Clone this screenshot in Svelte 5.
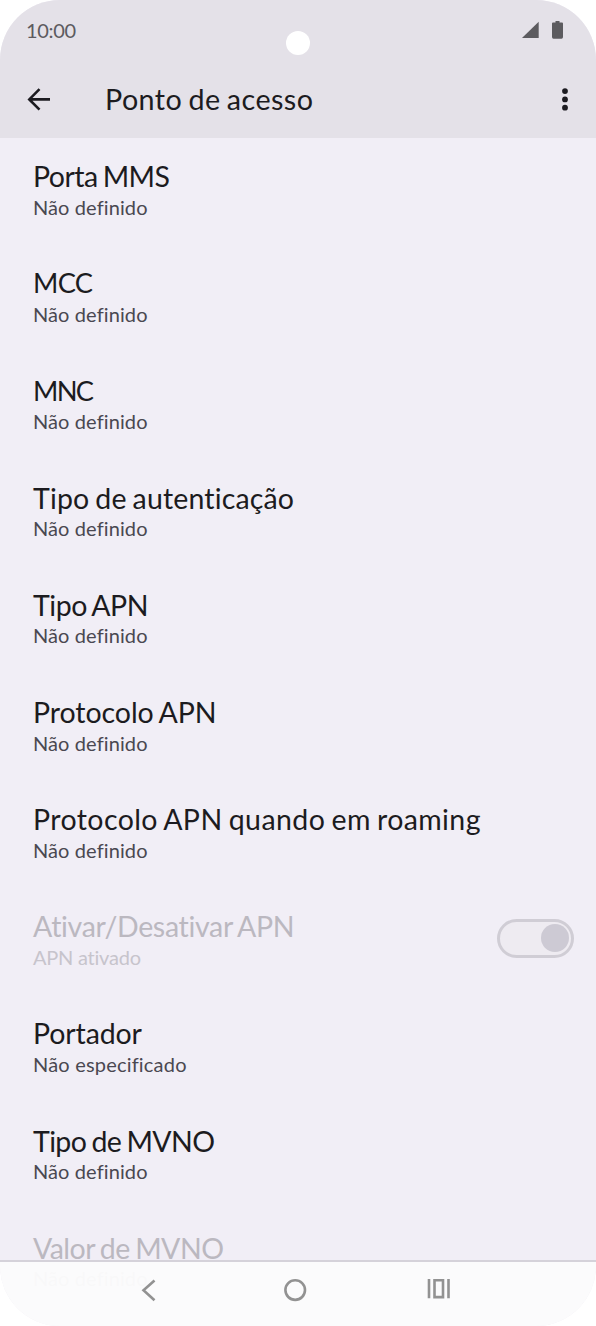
<script>
  const items = [
    { title: 'Porta MMS', width: 137, note: 'Não definido', noteWidth: 114.5 },
    { title: 'MCC', width: 60, note: 'Não definido', noteWidth: 114.5, caps: true },
    { title: 'MNC', width: 61, note: 'Não definido', noteWidth: 114.5, caps: true },
    { title: 'Tipo de autenticação', width: 261, note: 'Não definido', noteWidth: 114.5 },
    { title: 'Tipo APN', width: 115.500, note: 'Não definido', noteWidth: 114.5 },
    { title: 'Protocolo APN', width: 183.500, note: 'Não definido', noteWidth: 114.5 },
    { title: 'Protocolo APN quando em roaming', width: 447.500, note: 'Não definido', noteWidth: 114.5 },
    { title: 'Ativar/Desativar APN', width: 261.500, note: 'APN ativado', noteWidth: 108, disabled: true, toggle: true },
    { title: 'Portador', width: 109, note: 'Não especificado', noteWidth: 153.5 },
    { title: 'Tipo de MVNO', width: 182, note: 'Não definido', noteWidth: 114.5 },
    { title: 'Valor de MVNO', width: 191, note: 'Não definido', noteWidth: 114.5, disabled: true }
  ];

  // Spreads the letters of a label so that it fills the given width.
  function fit(node, width) {
    const apply = () => {
      node.style.letterSpacing = '0px';
      const natural = node.getBoundingClientRect().width;
      node.style.letterSpacing = `${(width - natural) / (node.textContent.length - 1)}px`;
    };
    apply();
    document.fonts.ready.then(apply);
  }
</script>

<div class="phone">
  <header>
    <div class="status">
      <span class="time" use:fit={50}>10:00</span>
      <svg class="indicators" width="44" height="20" viewBox="0 0 44 20">
        <path d="M2 18 18.7 1.7V18Z" />
        <path d="M35.5 1h4v1.5H42q1 0 1 1V17q0 1.8-1.5 1.8h-8q-1.5 0-1.5-1.8V3.500q0-1 1-1h2.500Z" />
      </svg>
    </div>
    <div class="bar">
      <svg width="26" height="26" viewBox="0 0 26 26" class="back">
        <path d="M24 13.400H3.500M13.500 3.100 3.300 13.400l10.200 10.300" />
      </svg>
      <h1 use:fit={208}>Ponto de acesso</h1>
      <svg width="8" height="26" viewBox="0 0 8 26" class="more">
        <circle cx="4" cy="5.100" r="2.900" /><circle cx="4" cy="13.400" r="2.900" /><circle cx="4" cy="21.700" r="2.900" />
      </svg>
    </div>
    <i class="camera"></i>
  </header>

  <main>
    {#each items as item}
      <section class:disabled={item.disabled}>
        <div class="text">
          <div class="title" class:caps={item.caps}><span use:fit={item.width}>{item.title}</span></div>
          <div class="note"><span use:fit={item.noteWidth}>{item.note}</span></div>
        </div>
        {#if item.toggle}<div class="toggle"><i></i></div>{/if}
      </section>
    {/each}
  </main>

  <nav>
    <svg width="596" height="64" viewBox="0 0 596 64">
      <path d="M154.500 18.500 143.500 28.300l11 10" />
      <circle cx="295.200" cy="28.100" r="9.800" />
      <path d="M429 17.100v19.200M448.500 17.100v19.200M434.500 18.300h8.500v16.800h-8.500Z" />
    </svg>
  </nav>
</div>

<style>
  :global(body) { margin: 0; background: #fff; }
  .phone {
    position: relative;
    width: 596px;
    height: 1326px;
    overflow: hidden;
    display: flex;
    flex-direction: column;
    border-radius: 60px;
    background: #f1eef6;
    color: #1c1b20;
    font-family: Lato, sans-serif;
    font-variant-ligatures: none;
    white-space: nowrap;
  }
  header { position: relative; flex: 0 0 138px; background: #e4e1e8; }
  .status {
    height: 60px;
    display: flex;
    justify-content: space-between;
    align-items: center;
    padding: 0 32px 0 26px;
    box-sizing: border-box;
    color: #5c5b5f;
    fill: #5c5b5f;
    font-size: 20px;
  }
  .time { display: inline-block; }
  .bar { height: 78px; display: flex; align-items: center; padding: 0 27px 0 26px; }
  .back { fill: none; stroke: #1c1b20; stroke-width: 2.600; }
  .more { margin-left: auto; fill: #1c1b20; }
  h1 { margin: 0 0 0 53px; font-size: 28.700px; line-height: 34px; font-weight: 400; word-spacing: -1.500px; }
  .camera {
    position: absolute;
    left: 286px;
    top: 30.500px;
    width: 24px;
    height: 24px;
    border-radius: 50%;
    background: #fff;
  }
  main { flex: 1; }
  section {
    height: 107.150px;
    box-sizing: border-box;
    padding: 21.300px 22px 0 33px;
    display: flex;
    justify-content: space-between;
  }
  section span { display: inline-block; }
  .title { font-size: 28.500px; line-height: 34px; height: 33.500px; word-spacing: -1.500px; }
  .title.caps { font-size: 27.300px; }
  .note { font-size: 20px; line-height: 28px; height: 28px; color: #4a4851; }
  .disabled .title { color: #bbb8c0; }
  .disabled .note { color: #c7c4cc; }
  .toggle {
    box-sizing: border-box;
    width: 77px;
    height: 39px;
    margin-top: 9.700px;
    padding-right: 2px;
    border: 3px solid #d0cdd5;
    border-radius: 20px;
    background: #eeebf1;
    display: flex;
    align-items: center;
    justify-content: flex-end;
  }
  .toggle i { width: 28px; height: 28px; border-radius: 50%; background: #cdcad4; }
  nav {
    position: absolute;
    left: 0;
    right: 0;
    bottom: 0;
    height: 64px;
    border-top: 2px solid #d5d2da;
    background: rgba(252, 252, 252, 0.93);
  }
  nav svg { display: block; fill: none; stroke: #929292; stroke-width: 2.600; }
</style>
